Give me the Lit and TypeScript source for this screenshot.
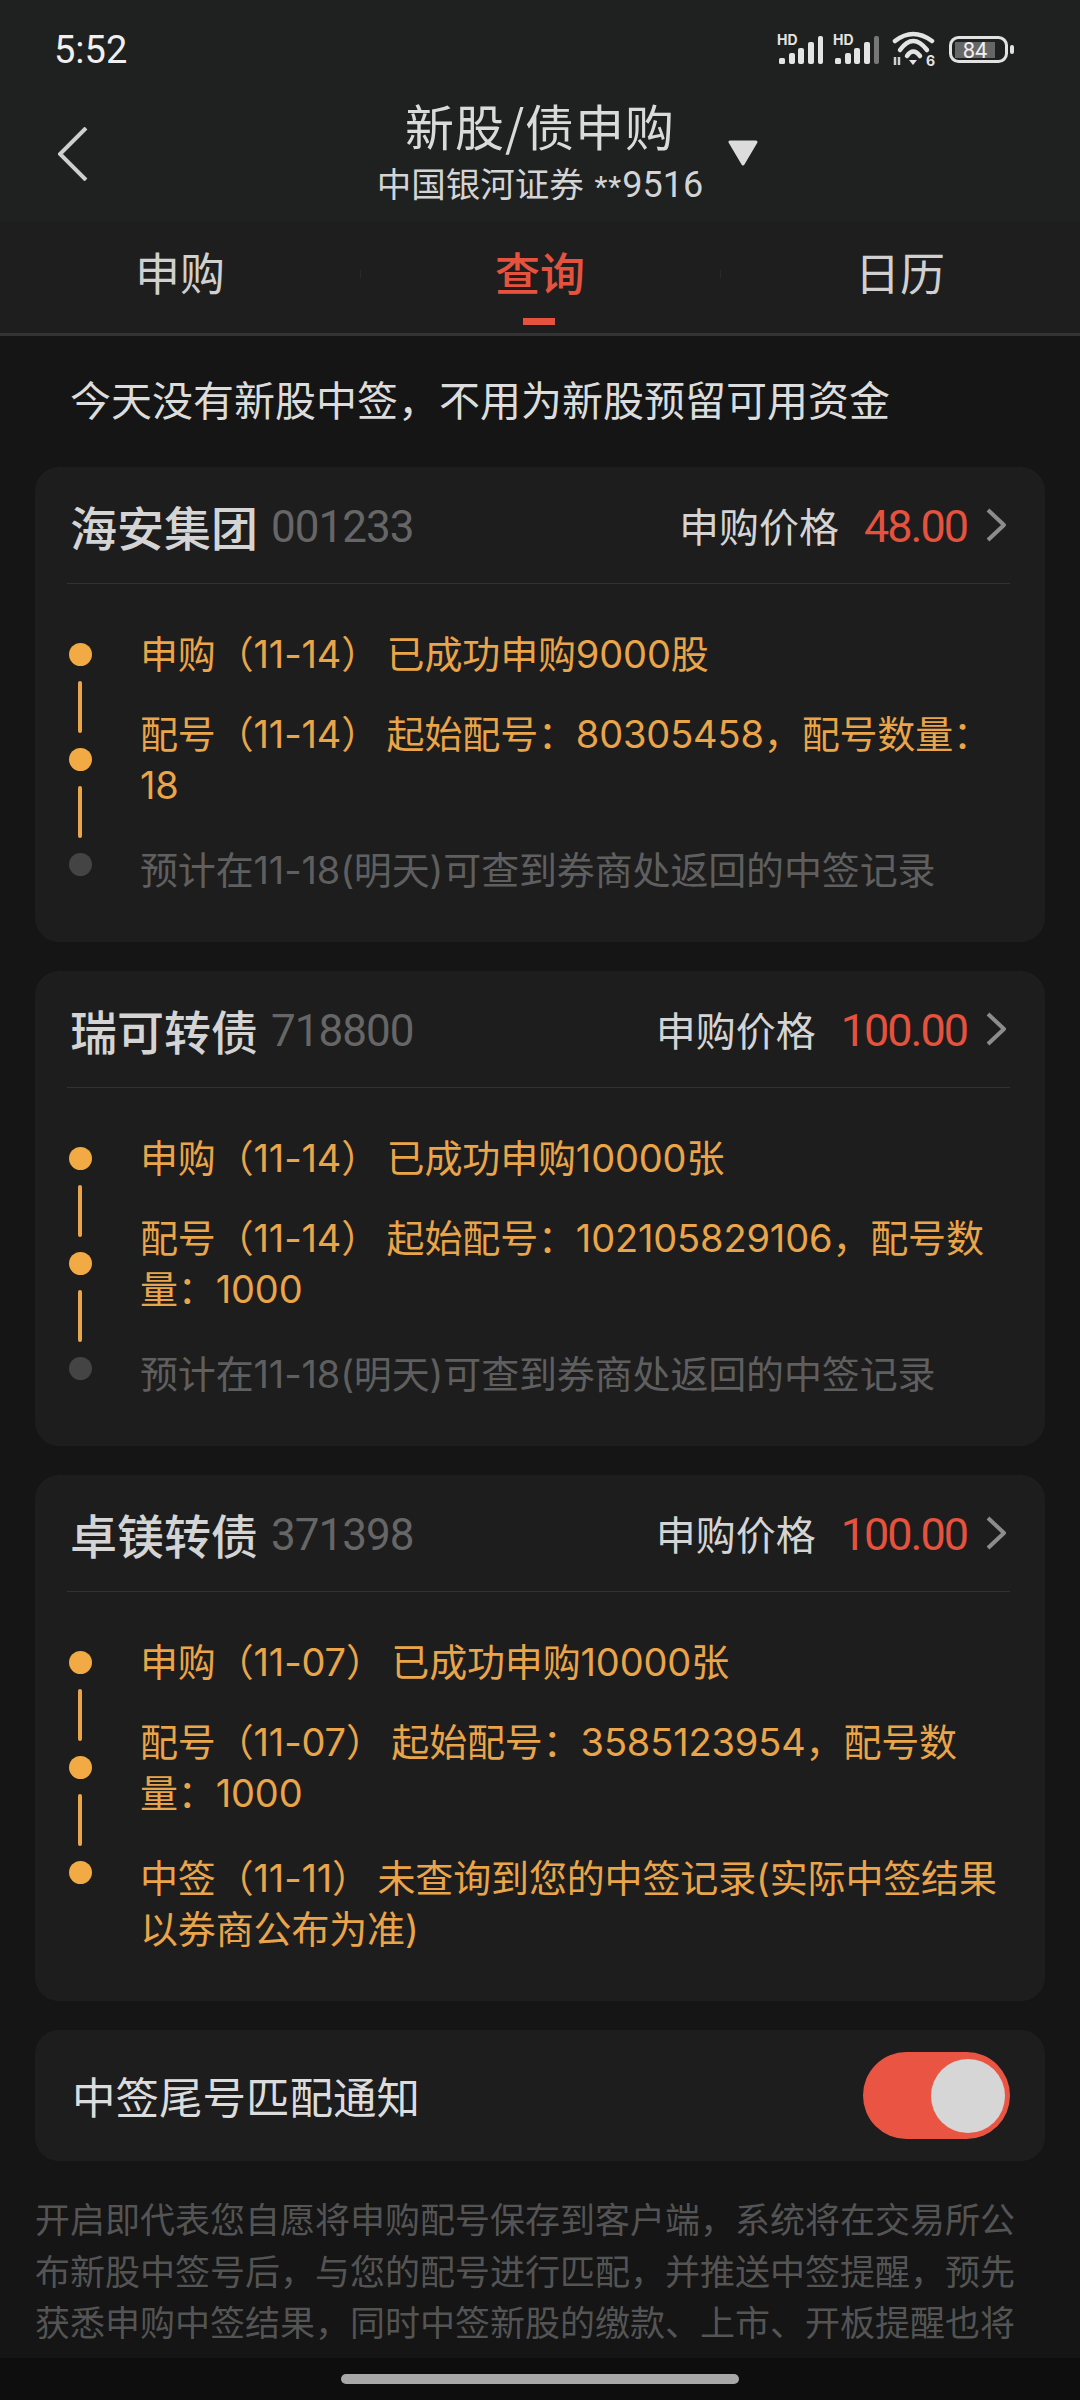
import { LitElement, html, css, svg } from "lit";
import { customElement } from "lit/decorators.js";

interface Step { text: string; muted?: boolean; }
interface Card { name: string; code: string; price: string; steps: Step[]; lastOn: boolean; }

const cards: Card[] = [
  { name: "海安集团", code: "001233", price: "48.00", lastOn: false, steps: [
    { text: "申购（11-14） 已成功申购9000股" },
    { text: "配号（11-14） 起始配号：80305458，配号数量：18" },
    { text: "预计在11-18(明天)可查到券商处返回的中签记录", muted: true } ] },
  { name: "瑞可转债", code: "718800", price: "100.00", lastOn: false, steps: [
    { text: "申购（11-14） 已成功申购10000张" },
    { text: "配号（11-14） 起始配号：102105829106，配号数量：1000" },
    { text: "预计在11-18(明天)可查到券商处返回的中签记录", muted: true } ] },
  { name: "卓镁转债", code: "371398", price: "100.00", lastOn: true, steps: [
    { text: "申购（11-07） 已成功申购10000张" },
    { text: "配号（11-07） 起始配号：3585123954，配号数量：1000" },
    { text: "中签（11-11） 未查询到您的中签记录(实际中签结果以券商公布为准)" } ] },
];

const signal = (x: number, lastColor: string) => svg`
  <text x=${x + 1} y="18" font-family="Inter, sans-serif" font-weight="700" font-size="14" fill="#e4e4e4">HD</text>
  <rect x=${x + 3} y="31" width="6" height="6" rx="1.5" fill="#e4e4e4"/>
  <rect x=${x + 13} y="26" width="6" height="11" rx="2" fill="#e4e4e4"/>
  <rect x=${x + 22} y="21" width="6" height="16" rx="2" fill="#e4e4e4"/>
  <rect x=${x + 32} y="15" width="6" height="22" rx="2" fill="#e4e4e4"/>
  <rect x=${x + 42} y="9" width="5" height="28" rx="2" fill=${lastColor}/>`;

@customElement("app-root")
export class AppRoot extends LitElement {
  static styles = css`
    :host { display: block; width: 1080px; height: 2400px; overflow: hidden; background: #151515;
      font-family: Inter, "Noto Sans CJK SC", sans-serif; color: #e0e0e0; text-spacing-trim: space-all; }
    .page { display: flex; flex-direction: column; height: 2400px; }
    .top { background: #1f2121; flex: none; }
    .status { height: 85px; padding: 0 62px 0 54px; display: flex; justify-content: space-between; align-items: flex-start; }
    .time { font-size: 38px; font-weight: 400; line-height: 44px; margin-top: 28px; color: #f0f0f0; font-family: Roboto, sans-serif; }
    .status svg { margin-top: 27px; display: block; }
    .titlebar { height: 136px; display: grid; grid-template-columns: 1fr auto 1fr; }
    .back { padding: 42px 0 0 58px; }
    .back svg, .tri svg { display: block; }
    .titles { text-align: center; }
    .title { font-size: 49px; line-height: 60px; margin-top: 10px; color: #dadada; font-family: "Noto Sans CJK SC", sans-serif; letter-spacing: 1px; }
    .sub { font-size: 34.5px; line-height: 46px; margin-top: 7px; color: #d4d4d4; font-family: Roboto, "Noto Sans CJK SC", sans-serif; }
    .stars { font-size: 30px; letter-spacing: 1px; margin-left: 2px; }
    .acct { font-size: 36px; }
    .tri { padding: 55px 0 0 24px; }
    .tabs { background: #1e1e1e; height: 112px; display: flex; border-bottom: 3px solid #343434; box-sizing: content-box; }
    .tab { flex: 1; position: relative; text-align: center; font-size: 45px; line-height: 58px; padding-top: 22px; color: #d0d0d0; font-family: "Noto Sans CJK SC", sans-serif; }
    .tab + .tab::before { content: ""; position: absolute; left: 0; top: 49px; width: 1px; height: 8px; background: #2a2a2a; }
    .tab.on { color: #e5533f; font-weight: 500; }
    .tab.on::after { content: ""; position: absolute; left: 163px; top: 97px; width: 32px; height: 7px; background: #e5533f; }
    .body { flex: 1; min-height: 0; overflow: hidden; padding: 0 35px; }
    .notice { font-size: 41px; line-height: 56px; padding: 34px 0 41px 35px; color: #dcdcdc; font-family: "Noto Sans CJK SC", sans-serif; }
    .card { background: #1d1d1d; border-radius: 24px; margin-bottom: 29px; }
    .head { margin: 0 35px 0 32px; height: 117px; box-sizing: border-box; border-bottom: 1px solid #323232; display: flex; align-items: center; padding: 1px 0 1px 3px; }
    .name { font-size: 47px; font-weight: 500; color: #d4d4d4; font-family: "Noto Sans CJK SC", sans-serif; }
    .code { font-size: 44px; letter-spacing: -1px; color: #666; margin-left: 13px; padding-top: 4px; font-family: Roboto, sans-serif; }
    .spacer { flex: 1; }
    .plabel { font-size: 40px; color: #d4d4d4; font-family: "Noto Sans CJK SC", sans-serif; }
    .price { font-size: 45px; letter-spacing: -2px; color: #e5533f; margin-left: 25px; padding-top: 3px; font-family: Roboto, sans-serif; font-weight: 400; }
    .chev { margin: 0 3px 0 18px; display: block; }
    .timeline { display: flex; padding: 45px 33px 46px 33px; }
    .rail { width: 24px; flex: none; display: flex; flex-direction: column; align-items: center; padding-top: 14px; }
    .dot { width: 23px; height: 23px; border-radius: 50%; background: #f2aa45; flex: none; }
    .dot.off { background: #444; }
    .bar { width: 4px; height: 52px; margin: 15px 0; border-radius: 2px; background: #eaa54a; flex: none; }
    .steps { flex: 1; padding-left: 48px; display: flex; flex-direction: column; gap: 29px; }
    .step { font-size: 38px; line-height: 51px; color: #eaa54a; word-spacing: -3px; letter-spacing: -0.15px; }
    .step:last-child { margin-top: 5px; }
    .step.muted { color: #5f5f5f; }
    .switch { height: 131px; display: flex; align-items: center; justify-content: space-between; padding: 0 35px 0 37px; margin-bottom: 31px; }
    .switch span { font-size: 43.5px; color: #dcdcdc; font-family: "Noto Sans CJK SC", sans-serif; }
    .toggle { width: 147px; height: 87px; border-radius: 44px; background: #ea5543; display: flex; align-items: center; justify-content: flex-end; padding-right: 5px; box-sizing: border-box; }
    .knob { width: 74px; height: 74px; border-radius: 50%; background: #d6d6d6; }
    .foot { font-size: 35px; line-height: 51.5px; color: #545454; font-family: "Noto Sans CJK SC", sans-serif; }
    .nav { height: 42px; flex: none; background: #0e0e0e; display: flex; justify-content: center; padding-top: 16px; box-sizing: border-box; }
    .pill { width: 398px; height: 10px; border-radius: 5px; background: #a8a8a8; }
  `;

  private renderCard(c: Card) {
    return html`<section class="card">
      <div class="head">
        <span class="name">${c.name}</span><span class="code">${c.code}</span>
        <span class="spacer"></span>
        <span class="plabel">申购价格</span><span class="price">${c.price}</span>
        <svg class="chev" width="22" height="34" viewBox="0 0 22 34"><path d="M3 2 L19 17 L3 32" fill="none" stroke="#8c8c8c" stroke-width="4" stroke-linejoin="round"/></svg>
      </div>
      <div class="timeline">
        <div class="rail">
          <div class="dot"></div><div class="bar"></div>
          <div class="dot"></div><div class="bar"></div>
          <div class="dot ${c.lastOn ? "" : "off"}"></div>
        </div>
        <div class="steps">
          ${c.steps.map((s) => html`<div class="step ${s.muted ? "muted" : ""}">${s.text}</div>`)}
        </div>
      </div>
    </section>`;
  }

  render() {
    return html`<div class="page">
      <div class="top">
        <div class="status">
          <div class="time">5:52</div>
          <svg width="242" height="45" viewBox="0 0 242 45">
            ${signal(0, "#e4e4e4")}
            ${signal(56, "#777")}
            <g fill="none" stroke="#e4e4e4" stroke-width="4.5" stroke-linecap="round">
              <path d="M119 14 Q137 0 156 14"/><path d="M124 23 Q137 5 151 23"/><path d="M131 29 Q137 20 144 29"/>
            </g>
            <path d="M133 33 L141 33 L137 38 Z" fill="#e4e4e4"/>
            <path d="M119 30 V38 M123 30 V38" stroke="#cfcfcf" stroke-width="2.5"/>
            <text x="150" y="39" font-family="Inter, sans-serif" font-weight="700" font-size="14" fill="#e4e4e4">6</text>
            <rect x="174.5" y="10.5" width="56" height="24" rx="8" fill="none" stroke="#e2e2e2" stroke-width="3"/>
            <rect x="179" y="15" width="40" height="16" fill="#666"/>
            <text x="199" y="30.500" text-anchor="middle" font-family="Roboto, sans-serif" font-weight="400" font-size="22" fill="#f0f0f0">84</text>
            <rect x="234" y="18" width="4" height="9" rx="2" fill="#e2e2e2"/>
          </svg>
        </div>
        <div class="titlebar">
          <div class="back"><svg width="30" height="54" viewBox="0 0 30 54"><path d="M28 1 L2 27 L28 53" fill="none" stroke="#cfcfcf" stroke-width="4"/></svg></div>
          <div class="titles">
            <div class="title">新股/债申购</div>
            <div class="sub">中国银河证券 <span class="stars">**</span><span class="acct">9516</span></div>
          </div>
          <div class="tri"><svg width="32" height="26" viewBox="0 0 32 26"><path d="M3 2 H29 L16 24 Z" fill="#dcdcdc" stroke="#dcdcdc" stroke-width="3" stroke-linejoin="round"/></svg></div>
        </div>
      </div>
      <div class="tabs">
        <div class="tab">申购</div><div class="tab on">查询</div><div class="tab">日历</div>
      </div>
      <div class="body">
        <div class="notice">今天没有新股中签，不用为新股预留可用资金</div>
        ${cards.map((c) => this.renderCard(c))}
        <section class="card switch"><span>中签尾号匹配通知</span><div class="toggle"><div class="knob"></div></div></section>
        <div class="foot">开启即代表您自愿将申购配号保存到客户端，系统将在交易所公布新股中签号后，与您的配号进行匹配，并推送中签提醒，预先获悉申购中签结果，同时中签新股的缴款、上市、开板提醒也将</div>
      </div>
      <div class="nav"><div class="pill"></div></div>
    </div>`;
  }
}
